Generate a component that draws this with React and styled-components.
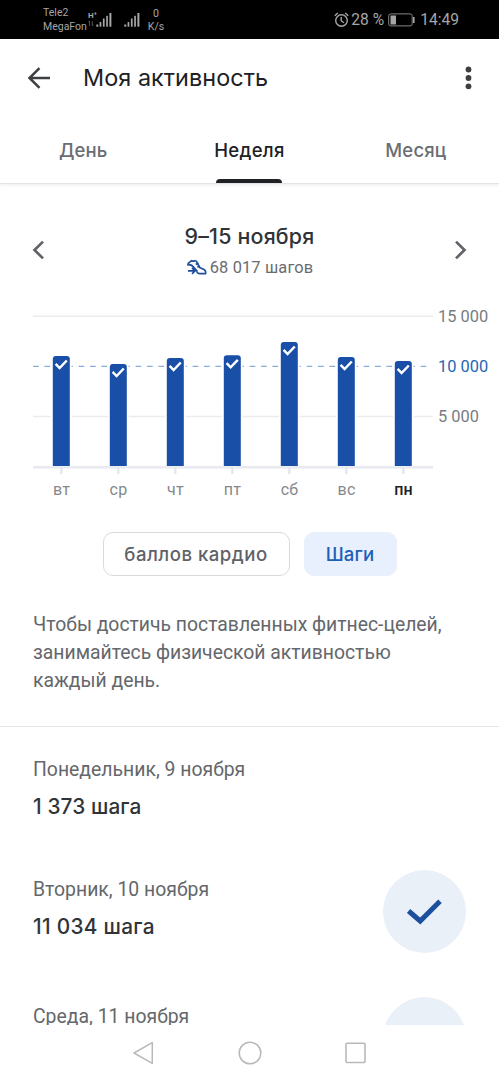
import React from "react";
import styled, { createGlobalStyle } from "styled-components";

const GlobalStyle = createGlobalStyle`
  * { box-sizing: border-box; }
  body { margin: 0; background: #fff; }
`;

const display = `Inter, "Liberation Sans", sans-serif`;
const body = `Roboto, "Liberation Sans", sans-serif`;

const Screen = styled.div`
  width: 499px;
  height: 1080px;
  display: flex;
  flex-direction: column;
  overflow: hidden;
  background: #fff;
  font-family: ${body};
`;

const StatusBar = styled.header`
  height: 39px;
  flex: none;
  display: flex;
  align-items: center;
  justify-content: space-between;
  padding: 1px 40px 0 43px;
  background: #000;
  color: #a6a6a6;
`;

const StatusGroup = styled.div`
  display: flex;
  align-items: center;
`;

const Carriers = styled.div`
  width: 45px;
  font-size: 10.5px;
  line-height: 14.5px;
  white-space: nowrap;
`;

const Speed = styled.div`
  margin-left: 7px;
  width: 18px;
  font-size: 10.6px;
  line-height: 13px;
  text-align: center;
`;

const StatusText = styled.span`
  font-size: 15.6px;
  line-height: 20px;
  white-space: nowrap;
  margin-left: ${(p) => p.$gap}px;
`;

const AppBar = styled.div`
  height: 78px;
  flex: none;
  display: flex;
  align-items: center;
  padding: 0 18px 0 26px;
`;

const Title = styled.h1`
  flex: 1;
  margin: 0 0 0 31px;
  font: 400 23.4px/30px ${display};
  letter-spacing: 0.05px;
  color: #202124;
`;

const Tabs = styled.nav`
  height: 67px;
  flex: none;
  display: grid;
  grid-template-columns: repeat(3, 1fr);
  background: #fff;
  border-bottom: 1px solid #e2e3e4;
  box-shadow: 0 2px 2px rgba(60, 64, 67, 0.06);
`;

const Tab = styled.div`
  display: flex;
  flex-direction: column;
  align-items: center;
  justify-content: space-between;
  padding-top: 20px;
  font: ${(p) => (p.$active ? 500 : 450)} 18.5px/26px ${display};
  letter-spacing: ${(p) => (p.$active ? 0.3 : 0.15)}px;
  color: ${(p) => (p.$active ? "#202124" : "#6a6d72")};
`;

const Indicator = styled.span`
  width: 66px;
  height: 4px;
  border-radius: 4px 4px 0 0;
  background: #202124;
`;

const Period = styled.section`
  height: 116px;
  flex: none;
  display: flex;
  align-items: flex-start;
  justify-content: space-between;
  padding: 37px 31px 0;
`;

const Arrow = styled.svg`
  margin-top: 19px;
  display: block;
`;

const PeriodText = styled.div`
  display: flex;
  flex-direction: column;
  align-items: center;
`;

const PeriodTitle = styled.div`
  font: 450 21.4px/30px ${display};
  letter-spacing: 0.2px;
  color: #303438;
`;

const PeriodTotal = styled.div`
  display: flex;
  align-items: center;
  gap: 3px;
  height: 32px;
  padding-left: 1px;
  font-size: 16.4px;
  letter-spacing: 0.15px;
  color: #686c70;
`;

const Chart = styled.section`
  height: 210px;
  flex: none;
  display: flex;
  padding-left: 33px;
`;

const Plot = styled.div`
  width: 400px;
`;

const Days = styled.div`
  display: flex;
  padding-top: 3px;
`;

const Day = styled.div`
  width: 57px;
  flex: none;
  text-align: center;
  font-size: 16px;
  line-height: 24px;
  letter-spacing: 0.2px;
  font-weight: ${(p) => (p.$active ? 500 : 400)};
  color: ${(p) => (p.$active ? "#202124" : "#85888c")};
`;

const Scale = styled.div`
  margin: 5px 0 0 5px;
  display: flex;
  flex-direction: column;
  gap: 26px;
`;

const ScaleLabel = styled.span`
  font-size: 16.4px;
  line-height: 24px;
  letter-spacing: 0;
  white-space: nowrap;
  color: ${(p) => (p.$goal ? "#2566b4" : "#787b7f")};
`;

const Chips = styled.div`
  height: 78px;
  flex: none;
  display: flex;
  justify-content: center;
  align-items: flex-start;
  gap: 14px;
  padding-top: 22px;
`;

const Chip = styled.button`
  width: ${(p) => p.$width}px;
  height: 44px;
  padding: 0 0 1px;
  border: 1px solid ${(p) => (p.$active ? "#e8f0fd" : "#d8dadd")};
  border-radius: 10px;
  background: ${(p) => (p.$active ? "#e8f0fd" : "#fff")};
  color: ${(p) => (p.$active ? "#1f5fb8" : "#5f6368")};
  font: 450 18.6px/26px ${display};
  letter-spacing: ${(p) => p.$track}px;
  white-space: nowrap;
`;

const Advice = styled.p`
  height: 139px;
  flex: none;
  margin: 0;
  padding: 23px 33px 0;
  border-bottom: 1px solid #e3e4e6;
  font-size: 19.35px;
  line-height: 28.2px;
  letter-spacing: 0;
  white-space: pre-line;
  color: #64676b;
`;

const Log = styled.main`
  flex: 1;
  min-height: 0;
  overflow: hidden;
`;

const Entry = styled.article`
  height: ${(p) => p.$height}px;
  display: flex;
  align-items: flex-start;
  justify-content: space-between;
  padding: ${(p) => p.$top}px 33px 0 33px;
`;

const EntryDate = styled.div`
  font-size: 19.4px;
  line-height: 40px;
  letter-spacing: 0;
  color: #64676b;
`;

const EntrySteps = styled.div`
  font: 450 20.8px/34px ${display};
  letter-spacing: ${(p) => p.$track || 0}px;
  color: #303438;
`;

const Badge = styled.div`
  width: 83px;
  height: 83px;
  flex: none;
  display: flex;
  align-items: center;
  justify-content: center;
  border-radius: 50%;
  background: #eaf0f8;
`;

const SystemNav = styled.footer`
  height: 55px;
  flex: none;
  display: flex;
  justify-content: center;
  align-items: center;
  gap: 82px;
  background: #fff;
`;

const chart = [
  { day: "вт", top: 356 },
  { day: "ср", top: 364 },
  { day: "чт", top: 358 },
  { day: "пт", top: 355.3 },
  { day: "сб", top: 342 },
  { day: "вс", top: 357 },
  { day: "пн", top: 361, active: true },
];

const SignalIcon = styled.svg`
  margin-left: ${(p) => p.$gap}px;
`;

function Signal({ gap = 0 }) {
  return (
    <SignalIcon $gap={gap} width="16" height="16" viewBox="0 0 16 16" fill="#a6a6a6">
      <rect x="0.3" y="12.5" width="2" height="2.2" />
      <rect x="3.6" y="10" width="1.7" height="4.7" />
      <rect x="6.9" y="6.5" width="1.7" height="8.2" />
      <rect x="10.2" y="3.8" width="1.7" height="10.9" />
      <rect x="13.4" y="1" width="2" height="13.7" />
    </SignalIcon>
  );
}

const Network = styled.div`
  display: flex;
  flex-direction: column;
  align-items: flex-start;
  width: 8px;
  height: 18px;
  font-size: 8px;
  font-weight: 700;
  line-height: 9px;
`;

function Alarm() {
  return (
    <svg width="15" height="16" viewBox="0 0 15 16" fill="none" stroke="#a6a6a6" strokeWidth="1.4">
      <circle cx="7.5" cy="8.5" r="5.8" />
      <path d="M7.2 5v3.7l2.7 2M0.8 3.8l3-2.7M14.2 3.8l-3-2.7" />
    </svg>
  );
}

const BatteryIcon = styled.svg`
  margin-left: 4px;
`;

function Bars() {
  return (
    <svg width="400" height="175" viewBox="33 300 400 175" display="block">
      <path d="M33 316.3h400M33 416.5h400" stroke="#ebecf0" strokeWidth="1.5" />
      <path d="M33 366.4h395" stroke="#88aeda" strokeWidth="1.2" strokeDasharray="5.7 5.7" />
      <path d="M33 467.3h400" stroke="#e8eaef" strokeWidth="2.4" />
      {chart.map(({ day, top }, i) => {
        const x = 61.3 + i * 57;
        return (
          <g key={day}>
            <path d={`M${x} 468v6`} stroke="#e2e5ec" strokeWidth="2.2" />
            <rect x={x - 10.3} y={top - 1} width="20.6" height={467.2 - top} fill="#fff" />
            <path
              d={`M${x - 8.5} 466V${top + 3}q0 -3 3 -3h11q3 0 3 3V466z`}
              fill="#194fa6"
            />
            <path
              d={`M${x - 5.7} ${top + 7.9}l4 4.1l7.2 -7.5`}
              fill="none"
              stroke="#fff"
              strokeWidth="2.5"
            />
          </g>
        );
      })}
    </svg>
  );
}

function Shoe() {
  return (
    <svg width="20" height="17" viewBox="0 0 20 17" fill="none" stroke="#1f4f9c" strokeWidth="1.7" strokeLinejoin="round">
      <path d="M1 6.6Q.6 4.4 2.2 3.6L4.6 1.6Q5.8 2.8 7.6 1.7L9.4 2.2 12.6 8.4 17 10.6Q19.2 11.8 18.6 14.6H12.6Q11 14.6 9.8 13" />
      <path d="M1.2 5.6Q4.6 5.2 7 8.6L10.4 12.6M8.8 5.4l2.6-1.1M10.4 8.1l2.6-1.1M1 11.8h6.6M5 8.8l3 3-3 3" />
    </svg>
  );
}

function Check() {
  return (
    <svg width="36" height="26" viewBox="0 0 36 26" fill="none" stroke="#1d4f9f" strokeWidth="5">
      <path d="M1.6 12L13.2 22 33 2.3" />
    </svg>
  );
}

export default function App() {
  return (
    <>
      <GlobalStyle />
      <Screen>
        <StatusBar>
          <StatusGroup>
            <Carriers>
              Tele2
              <br />
              MegaFon
            </Carriers>
            <Network>
              <span>H⁺</span>
              <svg width="6" height="7" viewBox="0 0 6 7" stroke="#505050" fill="none">
                <path d="M1.5 6V1M.3 2.2l1.2-1.2M4.3 1v5M5.5 4.8L4.3 6" />
              </svg>
            </Network>
            <Signal />
            <Signal gap={12} />
            <Speed>
              0
              <br />
              K/s
            </Speed>
          </StatusGroup>
          <StatusGroup>
            <Alarm />
            <StatusText $gap={2}>28 %</StatusText>
            <BatteryIcon width="27" height="14" viewBox="0 0 27 14" fill="none" stroke="#858585">
              <rect x=".7" y=".9" width="23.5" height="12" rx="2" />
              <rect x="2.5" y="2.5" width="5.5" height="9" fill="#a6a6a6" stroke="none" />
              <path d="M25.8 4v6" stroke="#a6a6a6" strokeWidth="1.6" />
            </BatteryIcon>
            <StatusText $gap={5}>14:49</StatusText>
          </StatusGroup>
        </StatusBar>

        <AppBar>
          <svg width="26" height="26" viewBox="0 0 26 26" fill="none" stroke="#3c4043" strokeWidth="2.5">
            <path d="M24 13H3.8M13.5 3.2L3.5 13l10 9.8" />
          </svg>
          <Title>Моя активность</Title>
          <svg width="22" height="24" viewBox="0 0 22 24" fill="#3c4043">
            <circle cx="9.5" cy="3.5" r="2.9" />
            <circle cx="9.5" cy="12" r="2.9" />
            <circle cx="9.5" cy="20.3" r="2.9" />
          </svg>
        </AppBar>

        <Tabs>
          <Tab>День</Tab>
          <Tab $active>
            Неделя
            <Indicator />
          </Tab>
          <Tab>Месяц</Tab>
        </Tabs>

        <Period>
          <Arrow width="15" height="20" viewBox="0 0 15 20" fill="none" stroke="#606367" strokeWidth="2.7">
            <path d="M12 1.6L3.5 10l8.5 8.4" />
          </Arrow>
          <PeriodText>
            <PeriodTitle>9–15 ноября</PeriodTitle>
            <PeriodTotal>
              <Shoe />
              <span>68 017 шагов</span>
            </PeriodTotal>
          </PeriodText>
          <Arrow width="15" height="20" viewBox="0 0 15 20" fill="none" stroke="#606367" strokeWidth="2.7">
            <path d="M3 1.6l8.5 8.4L3 18.4" />
          </Arrow>
        </Period>

        <Chart>
          <Plot>
            <Bars />
            <Days>
              {chart.map(({ day, active }) => (
                <Day key={day} $active={active}>{day}</Day>
              ))}
            </Days>
          </Plot>
          <Scale>
            <ScaleLabel>15 000</ScaleLabel>
            <ScaleLabel $goal>10 000</ScaleLabel>
            <ScaleLabel>5 000</ScaleLabel>
          </Scale>
        </Chart>

        <Chips>
          <Chip $width={187} $track={0.5}>баллов кардио</Chip>
          <Chip $width={93} $track={0.1} $active>Шаги</Chip>
        </Chips>

        <Advice>
          {"Чтобы достичь поставленных фитнес-целей,\nзанимайтесь физической активностью\nкаждый день."}
        </Advice>

        <Log>
          <Entry $height={143} $top={23}>
            <div>
              <EntryDate>Понедельник, 9 ноября</EntryDate>
              <EntrySteps $track={0.1}>1 373 шага</EntrySteps>
            </div>
          </Entry>
          <Entry $height={127} $top={0}>
            <div>
              <EntryDate>Вторник, 10 ноября</EntryDate>
              <EntrySteps $track={0.3}>11 034 шага</EntrySteps>
            </div>
            <Badge><Check /></Badge>
          </Entry>
          <Entry $height={127} $top={0}>
            <EntryDate>Среда, 11 ноября</EntryDate>
            <Badge />
          </Entry>
        </Log>

        <SystemNav>
          <svg width="24" height="24" viewBox="0 0 24 24" fill="none" stroke="#b9b9b9" strokeWidth="1.5" strokeLinejoin="round">
            <path d="M2 12L20.3 1.7v20.6z" />
          </svg>
          <svg width="24" height="24" viewBox="0 0 24 24" fill="none" stroke="#b9b9b9" strokeWidth="1.5">
            <circle cx="12" cy="12" r="10.8" />
          </svg>
          <svg width="24" height="24" viewBox="0 0 24 24" fill="none" stroke="#b9b9b9" strokeWidth="1.6">
            <rect x="2" y="2.3" width="19" height="19.2" rx="1" />
          </svg>
        </SystemNav>
      </Screen>
    </>
  );
}
